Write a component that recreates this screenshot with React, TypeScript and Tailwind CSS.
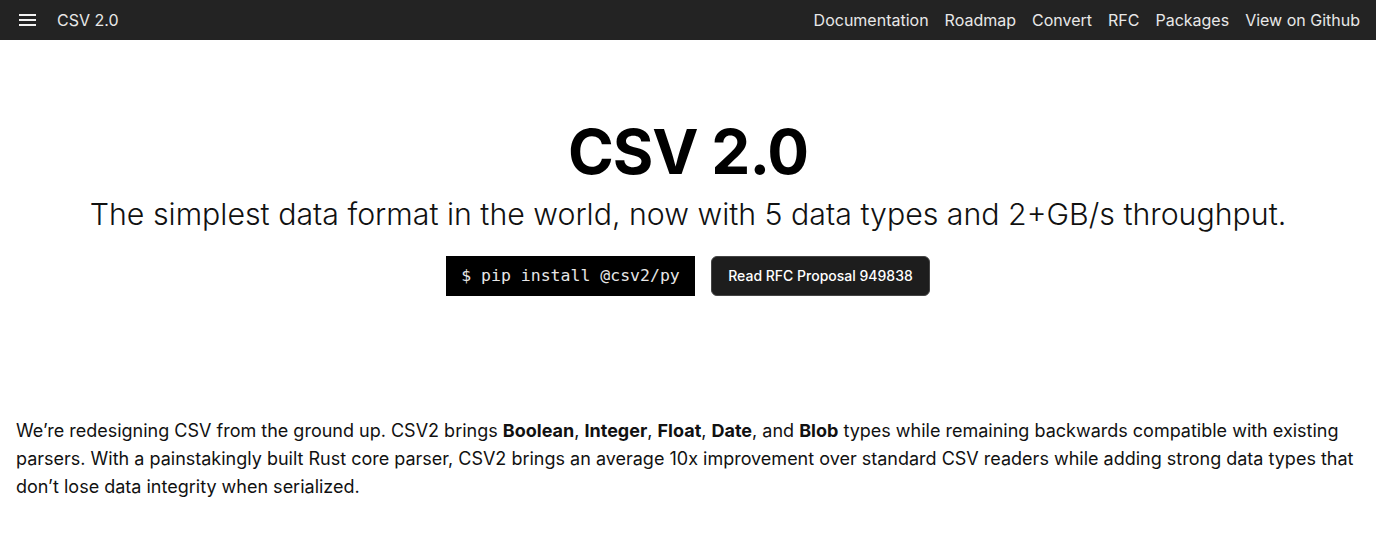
import { FC } from "react";

const links = ["Documentation", "Roadmap", "Convert", "RFC", "Packages", "View on Github"];

const NavBar: FC = () => {
	return <div className="w-full h-10 bg-[#232323] flex flex-row items-center justify-between px-4 text-[#e8e8e8]">
		<div className="flex flex-row items-center gap-[18px]">
			<svg width="22" height="22" viewBox="0 0 22 22" className="ml-[1px]">
				<rect x="2" y="5" width="17" height="2" fill="#f2f2f2" />
				<rect x="2" y="10" width="17" height="2" fill="#f2f2f2" />
				<rect x="2" y="15" width="17" height="2" fill="#f2f2f2" />
			</svg>
			<span className="text-base">CSV 2.0</span>
		</div>
		<div className="flex flex-row items-center gap-4">
			{links.map((l) => <span key={l} className="text-base">{l}</span>)}
		</div>
	</div>
}

const Hero: FC = () => {
	return <div className="w-full flex flex-col items-center pt-[76px]">
		<h1 className="text-[62px] leading-[72px] font-bold text-black tracking-[-1px]">CSV 2.0</h1>
		<p className="text-[30.3px] leading-9 font-light text-[#111] mt-[8px]">The simplest data format in the world, now with 5 data types and 2+GB/s throughput.</p>
		<div className="flex flex-row gap-4 mt-[24px]">
			<div className="h-10 w-[249px] bg-black text-[#e6e6e6] flex items-center justify-center text-[16.5px]" style={{ fontFamily: "'DejaVu Sans Mono', monospace" }}>$ pip install @csv2/py</div>
			<button className="h-10 w-[219px] bg-[#1d1d1d] text-white rounded-md border border-[#444] text-sm font-medium">Read RFC Proposal 949838</button>
		</div>
	</div>
}

export default function App() {
	return <div className="w-full min-h-[540px] bg-white text-[#111]" style={{ fontFamily: "Inter, 'Liberation Sans', sans-serif" }}>
		<NavBar />
		<Hero />
		<p className="px-4 mt-[121px] text-lg leading-7">
			We’re redesigning CSV from the ground up. CSV2 brings <b>Boolean</b>, <b>Integer</b>, <b>Float</b>, <b>Date</b>, and <b>Blob</b> types while remaining backwards compatible with existing parsers. With a painstakingly built Rust core parser, CSV2 brings an average 10x improvement over standard CSV readers while adding strong data types that don’t lose data integrity when serialized.
		</p>
	</div>
}
